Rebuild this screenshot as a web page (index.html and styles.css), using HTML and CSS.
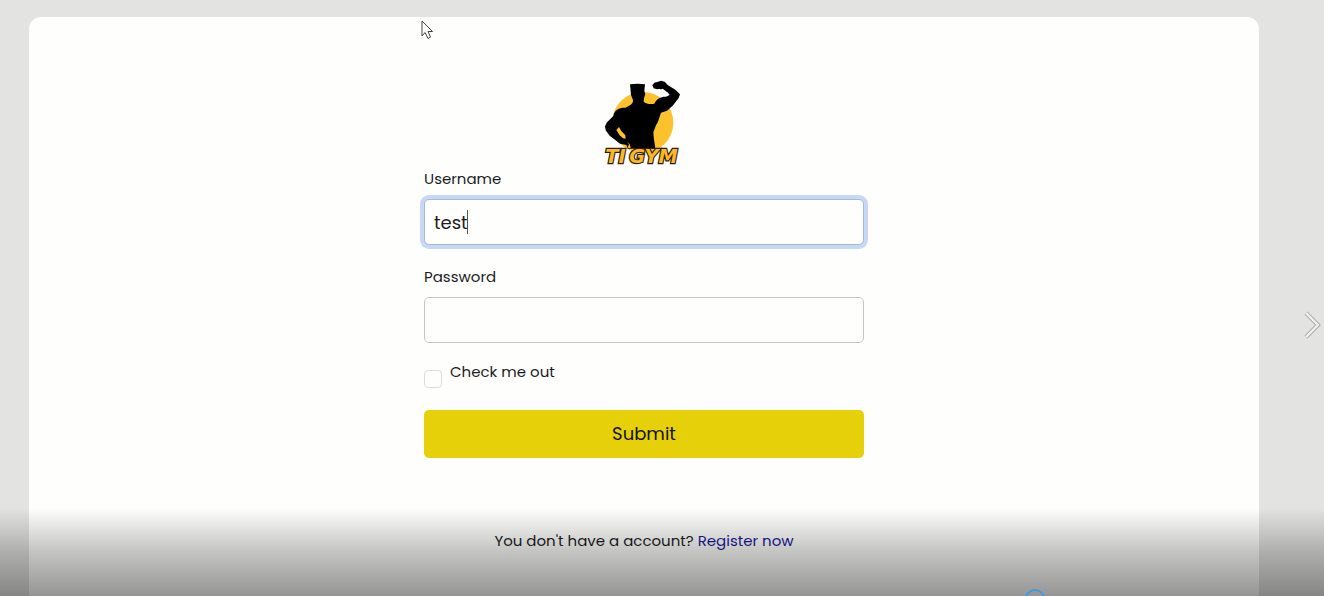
FILE: index.html
```html
<!DOCTYPE html>
<html lang="en">
<head>
<meta charset="utf-8">
<meta name="viewport" content="width=device-width, initial-scale=1">
<title>TI GYM - Login</title>
<link rel="stylesheet" href="styles.css">
</head>
<body>
<main class="card">
  <form class="login">
    <svg class="logo" viewBox="42 30 234 258" role="img" aria-label="TI GYM">
      <circle cx="158" cy="158" r="92" fill="#fcc12d"/>
      <path d="M120 43L142 41L165 43L163 63L166 72L162 84L161 95C168 102 182 103 193 101C199 86 214 79 228 80L239 75L234 68L218 56C213 59 207 56 201 58L191 55L187 46L193 38L204 35L213 32L224 35L233 45L256 59L270 73L266 84L248 107L231 122L213 128C207 145 204 158 198 166L190 187C191 205 194 220 196 236L113 236C112 229 110 224 106 224L90 221L77 211L59 197L47 181L45 169L51 157L70 138C73 119 89 112 106 113C118 108 130 102 129 90L123 75Z" fill="#000"/>
      <path d="M79 180L87 171L94 183L106 196L107 206L99 205L89 196Z" fill="#fcc12d"/>
      <path d="M109 216l8 7-4 10 9 1-3-12z" fill="#fcc12d"/>
      <g class="logo-text"><text x="46" y="279">TI</text><text x="118" y="279">GYM</text></g>
    </svg>
    <div class="field">
      <label for="username">Username</label>
      <div class="control">
        <input class="text-input active" id="username" type="text" value="test" autocomplete="off">
        <span class="caret"></span>
      </div>
    </div>
    <div class="field">
      <label for="password">Password</label>
      <input class="text-input" id="password" type="password">
    </div>
    <div class="check">
      <input class="check-box" id="check" type="checkbox">
      <label for="check">Check me out</label>
    </div>
    <button class="submit" type="submit">Submit</button>
    <p class="register">You don't have a account? <a href="#">Register now</a></p>
  </form>
</main>
<div class="shade"></div>
<button class="next" type="button" aria-label="Next">
  <svg width="18" height="30" viewBox="0 0 18 30" fill="none">
    <path d="M3 3L15 15L3 27" stroke="#999" stroke-width="4"/>
    <path d="M3 3L15 15L3 27" stroke="#eee" stroke-width="2.500"/>
  </svg>
</button>
<span class="ring"></span>
<svg class="pointer" width="14" height="20" viewBox="0 0 14 20">
  <path d="M2 1V16L5 12.500L8 18.500L10.500 17L8 11.500H12.500Z" fill="#fff" stroke="#444" stroke-width="1"/>
</svg>
</body>
</html>
```
FILE: styles.css
```css
* { box-sizing: border-box; }

body {
  margin: 0;
  height: 100vh;
  position: relative;
  overflow: hidden;
  padding: 17px 65px 0 29px;
  background: #e3e3e2;
  color: #1c1c1e;
  font: 15px/24px Poppins, Inter, "Open Sans", sans-serif;
}

.card {
  min-height: 100vh;
  padding: 63px 24px;
  border-radius: 12px;
  background: #fefefd;
}

.login {
  display: flex;
  flex-direction: column;
  max-width: 440px;
  margin: 0 auto;
}

.logo {
  width: 78px;
  height: 86px;
  margin: 0 0 1px 180px;
  overflow: visible;
}

.logo-text {
  font: italic 700 58px/1 "DejaVu Sans", sans-serif;
  fill: #fcb827;
  stroke: #2b1c08;
  stroke-width: 7px;
  paint-order: stroke;
}

.field {
  display: flex;
  flex-direction: column;
  gap: 8px;
  margin-bottom: 20px;
}

.control {
  display: flex;
  position: relative;
}

.text-input {
  width: 100%;
  height: 46px;
  padding: 0 9px;
  border: 1px solid #c4c4c6;
  border-radius: 5px;
  background: #fefefd;
  color: #1c1c1e;
  font: inherit;
  font-size: 18px;
  outline: none;
}

.text-input.active {
  border-color: #a5b8d8;
  box-shadow: 0 0 0 4px #c6d8f6;
}

.caret {
  position: absolute;
  left: 43px;
  top: 11px;
  width: 1px;
  height: 24px;
  background: #555;
}

.check {
  display: flex;
  gap: 8px;
  margin: -4px 0 22px;
  padding-top: 1px;
}

.check-box {
  appearance: none;
  width: 18px;
  height: 18px;
  margin: 10px 0 0;
  border: 1px solid #dcdcdc;
  border-radius: 4px;
  background: #fefefd;
}

.submit {
  height: 48px;
  border: 0;
  border-radius: 5px;
  background: #e5d00a;
  color: #111;
  font: inherit;
  font-size: 18px;
}

.register {
  margin: 71px 0 0;
  text-align: center;
}

.register a {
  color: #1a1a9c;
  text-decoration: none;
}

.shade {
  position: absolute;
  inset: auto 0 0;
  height: 88px;
  background: linear-gradient(rgba(0, 0, 0, 0), rgba(0, 0, 0, .23) 50%, rgba(0, 0, 0, .41));
  pointer-events: none;
}

.next {
  position: absolute;
  right: 3px;
  top: 310px;
  display: flex;
  padding: 0;
  border: 0;
  background: none;
}

.ring {
  position: absolute;
  left: 1025px;
  bottom: -13px;
  width: 20px;
  height: 20px;
  border: 2px solid #3a9be8;
  border-radius: 50%;
}

.pointer {
  position: absolute;
  left: 420px;
  top: 20px;
}
```
